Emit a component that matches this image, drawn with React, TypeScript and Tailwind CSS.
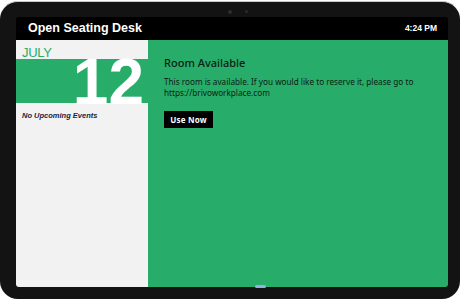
import React from "react";

function CalendarPanel() {
  return (
    <div className="flex w-[132px] flex-col bg-[#f2f2f2]">
      <div className="h-[19px] pt-[6px] pl-[6px]">
        <p className="text-[13px] leading-none font-medium tracking-tight text-[#27ad69] [font-family:'Liberation_Sans',sans-serif]">
          JULY
        </p>
      </div>
      <div className="flex h-[44px] justify-end bg-[#27ad69] pr-[4px]">
        <span className="h-[44px] text-[64px] leading-[46px] font-bold text-white [font-family:'Liberation_Sans',sans-serif]">
          12
        </span>
      </div>
      <p className="mt-[7px] pl-[6px] text-[7.5px] font-bold text-[#1c2240] italic [font-family:'Liberation_Sans',sans-serif]">
        No Upcoming Events
      </p>
    </div>
  );
}

function RoomPanel() {
  return (
    <div className="flex flex-1 flex-col items-start bg-[#27ad69] pt-[17px] pl-[16px] text-[#0c1c13] [font-family:'Noto_Sans',sans-serif]">
      <h2 className="text-[11px] leading-none font-medium">Room Available</h2>
      <p className="mt-[9px] w-[275px] text-[8.2px] leading-[10.5px]">
        This room is available. If you would like to reserve it, please go to
        https://brivoworkplace.com
      </p>
      <button className="mt-[13px] flex h-[17px] w-[49px] items-center justify-center bg-black text-[8px] font-bold tracking-wide text-white">
        Use Now
      </button>
    </div>
  );
}

export default function App() {
  return (
    <div className="relative h-[300px] w-[461px] overflow-hidden bg-white">
      <div className="relative mt-[1px] flex h-[298px] w-[460px] flex-col rounded-[18px] border-t border-[#c9c9c9] bg-[#131313] pt-[15px] pr-[12px] pb-[12px] pl-[16px]">
        {/* camera */}
        <span className="absolute top-[8px] left-[228px] size-[4px] rounded-full bg-[#2e2e2e]" />
        <span className="absolute top-[8px] left-[245px] size-[3px] rounded-full bg-[#2a2a2a]" />

        <div className="flex flex-1 flex-col overflow-hidden rounded-[3px]">
          <div className="flex h-[23px] items-center justify-between bg-black pr-[11px] pl-[12px] font-bold text-white [font-family:'Liberation_Sans',sans-serif]">
            <span className="text-[12.5px]">Open Seating Desk</span>
            <span className="text-[8.5px]">4:24 PM</span>
          </div>
          <div className="flex flex-1">
            <CalendarPanel />
            <RoomPanel />
          </div>
        </div>

        <span className="absolute bottom-[11px] left-[255px] h-[3px] w-[11px] rounded-full bg-[#8fb3e0]" />
      </div>
    </div>
  );
}
